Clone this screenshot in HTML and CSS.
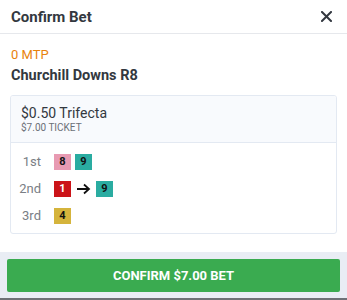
FILE: index.html
```html
<!DOCTYPE html>
<html>
<head>
<meta charset="utf-8">
<link rel="stylesheet" href="styles.css">
</head>
<body>
<div class="modal">
  <div class="header">
    <div class="title">Confirm Bet</div>
    <svg class="close" width="11" height="11" viewBox="0 0 11 11"><path d="M1 1 L10 10 M10 1 L1 10" stroke="#333840" stroke-width="2" stroke-linecap="square"/></svg>
  </div>
  <div class="content">
    <div class="mtp">0 MTP</div>
    <div class="race">Churchill Downs R8</div>
    <div class="card">
      <div class="card-head">
        <div class="bet">$0.50 Trifecta</div>
        <div class="ticket">$7.00 TICKET</div>
      </div>
      <div class="card-body">
        <div class="row">
          <div class="pos">1st</div>
          <div class="runners">
            <span class="badge pink">8</span>
            <span class="badge teal">9</span>
          </div>
        </div>
        <div class="row">
          <div class="pos">2nd</div>
          <div class="runners">
            <span class="badge red">1</span>
            <svg class="arrow" width="15" height="12" viewBox="0 0 15 12"><path d="M1 6 H13 M8 1.5 L13 6 L8 10.5" stroke="#111" stroke-width="1.8" fill="none"/></svg>
            <span class="badge teal">9</span>
          </div>
        </div>
        <div class="row">
          <div class="pos">3rd</div>
          <div class="runners">
            <span class="badge yellow">4</span>
          </div>
        </div>
      </div>
    </div>
  </div>
  <div class="footer">
    <button class="confirm">CONFIRM $7.00 BET</button>
  </div>
</div>
</body>
</html>
```
FILE: styles.css
```css
html, body {
  margin: 0;
  padding: 0;
  background: #fff;
}
body {
  font-family: Roboto, "Liberation Sans", sans-serif;
  color: #333840;
}
.modal {
  width: 347px;
  height: 300px;
  display: flex;
  flex-direction: column;
  overflow: hidden;
}
.header {
  height: 34px;
  box-sizing: border-box;
  border-bottom: 1px solid #e6e8ec;
  display: flex;
  align-items: center;
  justify-content: space-between;
  padding: 0 15px 0 11px;
}
.title {
  font-size: 15px;
  font-weight: 700;
  color: #333840;
}
.close {
  display: block;
}
.content {
  padding: 13px 10px 0 10px;
  height: 218px;
  box-sizing: border-box;
}
.mtp {
  font-size: 13px;
  line-height: 16px;
  color: #e8820c;
  padding-left: 1px;
}
.race {
  font-size: 14.5px;
  font-weight: 700;
  line-height: 18px;
  margin-top: 4px;
  padding-left: 1px;
  color: #333840;
}
.card {
  margin-top: 10px;
  border: 1px solid #e3e9f2;
  border-radius: 3px;
  overflow: hidden;
}
.card-head {
  background: #f8fafd;
  border-bottom: 1px solid #e3e9f2;
  padding: 9px 10px 0 10px;
  height: 47px;
  box-sizing: border-box;
}
.bet {
  font-size: 14px;
  line-height: 17px;
  color: #333840;
}
.ticket {
  font-size: 10px;
  line-height: 12px;
  color: #6b7078;
}
.card-body {
  padding: 10px 0 9px 0;
  display: flex;
  flex-direction: column;
  gap: 10px;
}
.row {
  display: flex;
  align-items: center;
  height: 17px;
}
.pos {
  width: 30px;
  text-align: right;
  font-size: 13px;
  color: #7a7e85;
}
.runners {
  display: flex;
  align-items: center;
  gap: 4px;
  margin-left: 13px;
}
.badge {
  width: 17px;
  height: 16px;
  display: flex;
  align-items: center;
  justify-content: center;
  font-size: 11px;
  font-weight: 700;
  color: #111;
  box-sizing: border-box;
}
.pink { background: #e89ab2; }
.teal { background: #2aaca1; }
.red { background: #cb1318; color: #fff; }
.yellow { background: #d5b43c; }
.arrow {
  display: block;
  margin: 0 1px 0 1px;
}
.footer {
  flex: 1;
  background: #e9edf4;
  padding: 7px 7px 0 7px;
  border-bottom: 2px solid #6e7176;
}
.confirm {
  width: 100%;
  height: 33px;
  border: none;
  border-radius: 2px;
  background: #3aab50;
  color: #fff;
  font-family: Roboto, "Liberation Sans", sans-serif;
  font-size: 13px;
  font-weight: 700;
  display: block;
}
```
